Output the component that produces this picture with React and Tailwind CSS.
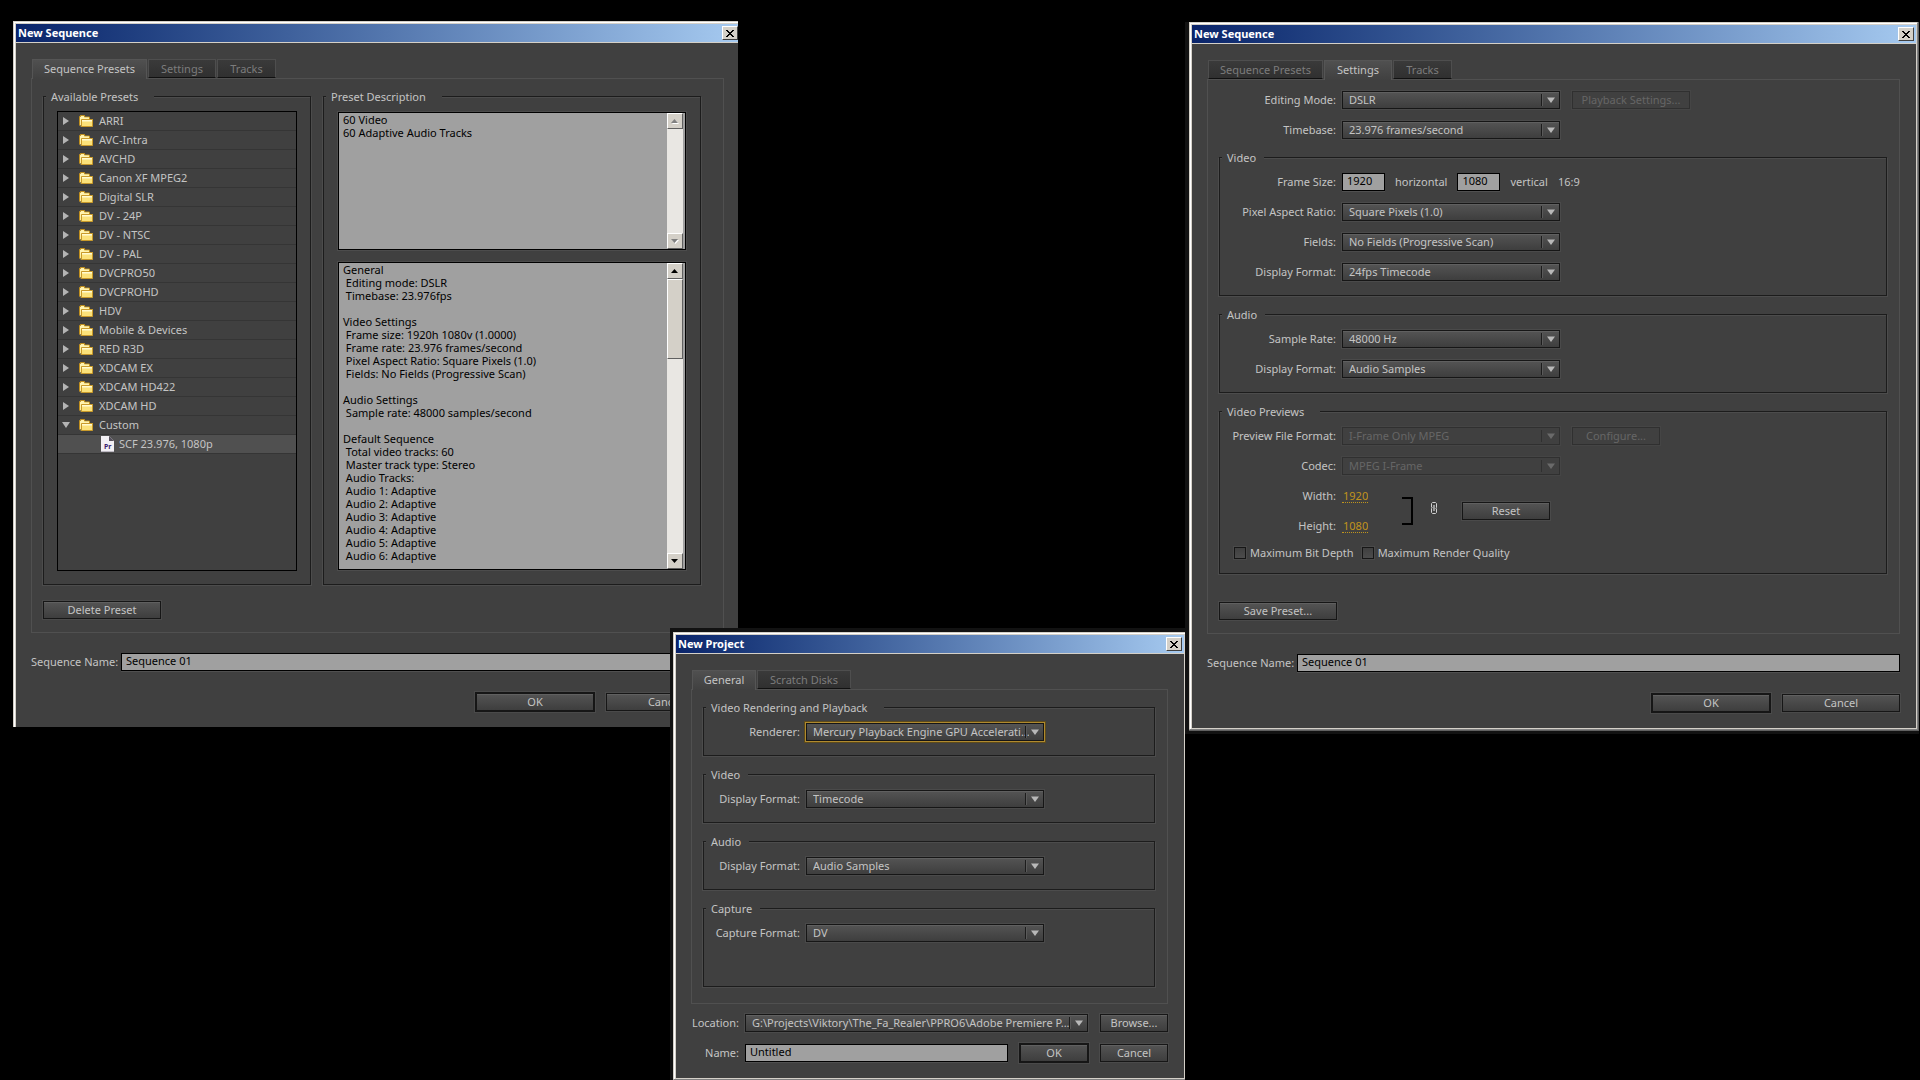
import { useId } from 'react'
import clsx from 'clsx'

const presets = [
  'ARRI',
  'AVC-Intra',
  'AVCHD',
  'Canon XF MPEG2',
  'Digital SLR',
  'DV - 24P',
  'DV - NTSC',
  'DV - PAL',
  'DVCPRO50',
  'DVCPROHD',
  'HDV',
  'Mobile & Devices',
  'RED R3D',
  'XDCAM EX',
  'XDCAM HD422',
  'XDCAM HD',
]

const trackSummary = `60 Video
60 Adaptive Audio Tracks`

const presetDetails = `General
 Editing mode: DSLR
 Timebase: 23.976fps

Video Settings
 Frame size: 1920h 1080v (1.0000)
 Frame rate: 23.976 frames/second
 Pixel Aspect Ratio: Square Pixels (1.0)
 Fields: No Fields (Progressive Scan)

Audio Settings
 Sample rate: 48000 samples/second

Default Sequence
 Total video tracks: 60
 Master track type: Stereo
 Audio Tracks:
 Audio 1: Adaptive
 Audio 2: Adaptive
 Audio 3: Adaptive
 Audio 4: Adaptive
 Audio 5: Adaptive
 Audio 6: Adaptive`

/* ---------- icons ---------- */

function FolderIcon() {
  return (
    <svg className="w-4 h-[14px] shrink-0" viewBox="0 0 16 14">
      <path d="M1.500 11.500v-9h1v-1h4v1.500h5v2" fill="#f6d863" stroke="#c08f1e" />
      <path d="M2 3h1V2h3v1.500h5V5H3v6H2z" fill="#fff3b0" />
      <path d="M3 5h11.500v7.500H2.500z" fill="#fbe27a" />
      <path d="M3.500 5.500h11v7h-11z" fill="none" stroke="#c99a2a" />
      <path d="M4 6h10v1.500H4z" fill="#fffbd2" />
    </svg>
  )
}

function PresetFileIcon() {
  return (
    <svg className="w-[13px] h-4 shrink-0" viewBox="0 0 13 16">
      <path d="M0 0h8l5 5v11H0z" fill="#f2f0f4" />
      <path d="M8 0v5h5z" fill="#55505c" />
      <path d="M0 15.5h13" stroke="#bdb9c2" />
      <text x="3" y="13" fontSize="7" fontWeight="700" fontFamily="Noto Sans, sans-serif" fill="#3a1a6e">Pr</text>
    </svg>
  )
}

function TreeArrow({ open }) {
  return (
    <svg className="w-2 h-2 shrink-0" viewBox="0 0 8 8">
      <path d={open ? 'M0 1h8L4 7z' : 'M1 0l6 4-6 4z'} fill="#b4b4b4" />
    </svg>
  )
}

function CloseIcon() {
  return (
    <svg className="w-2 h-[7px]" viewBox="0 0 8 7" shapeRendering="crispEdges">
      <path
        d="M0 0h2v1H0zM6 0h2v1H6zM1 1h2v1H1zM5 1h2v1H5zM2 2h4v1H2zM3 3h2v1H3zM2 4h4v1H2zM1 5h2v1H1zM5 5h2v1H5zM0 6h2v1H0zM6 6h2v1H6z"
        fill="#000"
      />
    </svg>
  )
}

function ScrollArrow({ up, disabled }) {
  return (
    <svg className="w-[8px] h-[5px]" viewBox="0 0 8 5">
      {disabled && <path d={up ? 'M1 5l3.5-4L8 5z' : 'M1 1h7L4.500 5z'} fill="#fff" />}
      <path d={up ? 'M0 4l3.500-4L7 4z' : 'M0 0h7L3.500 4z'} fill={disabled ? '#808080' : '#000'} />
    </svg>
  )
}

function BracketIcon() {
  return (
    <svg className="w-3 h-7" viewBox="0 0 12 28">
      <path d="M0 1h10v26H0" fill="none" stroke="#000" strokeWidth="2" />
    </svg>
  )
}

function LinkIcon() {
  return (
    <svg className="w-2 h-5" viewBox="0 0 8 20">
      <g fill="none" stroke="#d0d0d0">
        <path d="M1.500 6.500v-4l1-1h3l1 1v4l-1 1" />
        <path d="M2.500 6.500l-1 1v4l1 1h3l1-1v-4" />
      </g>
      <path d="M4 4v6" stroke="#f0f0f0" />
    </svg>
  )
}

/* ---------- controls ---------- */

function Button({ children, className, primary, disabled }) {
  return (
    <button
      type="button"
      disabled={disabled}
      className={clsx(
        'flex items-center justify-center shrink-0 whitespace-nowrap',
        primary ? 'h-5 border-2' : 'h-[18px] border',
        disabled
          ? 'border-[#303030] text-[#666666] shadow-[0_0_0_1px_#454545]'
          : 'border-[#161616] bg-linear-to-b from-[#545454] to-[#3e3e3e] text-[#c4c4c4] shadow-[0_0_0_1px_#4a4a4a,inset_0_1px_0_#606060]',
        className,
      )}
    >
      {children}
    </button>
  )
}

function Select({ id, value, className, focused, disabled }) {
  return (
    <div className={clsx('relative h-[18px]', className)}>
      <select
        id={id}
        disabled={disabled}
        defaultValue={value}
        className={clsx(
          'appearance-none block w-full h-[18px] pl-[6px] pr-[14px] border outline-none rounded-none opacity-100 leading-4',
          disabled
            ? 'border-[#303030] bg-[#404040] text-[#666666] shadow-[0_0_0_1px_#454545]'
            : 'border-[#161616] bg-linear-to-b from-[#545454] to-[#3e3e3e] text-[#c4c4c4]',
          !disabled && !focused && 'shadow-[0_0_0_1px_#4a4a4a,inset_0_1px_0_#606060]',
          focused && 'shadow-[0_0_0_1px_#b08a2e,0_0_0_2px_#5c4a1c]',
        )}
      >
        <option>{value}</option>
      </select>
      <span
        className={clsx(
          'absolute right-[18px] top-[3px] h-3 w-px pointer-events-none',
          disabled ? 'bg-[#303030]' : 'bg-[#1c1c1c] shadow-[1px_0_0_#5a5a5a]',
        )}
      />
      <svg className="absolute right-[5px] top-[6px] w-2 h-[6px] pointer-events-none" viewBox="0 0 8 6">
        <path d="M0 .5h8L4 6z" fill={disabled ? '#6a6a6a' : '#b8b8b8'} />
      </svg>
    </div>
  )
}

function TextInput({ id, value, className, label }) {
  return (
    <input
      id={id}
      aria-label={label}
      type="text"
      defaultValue={value}
      className={clsx(
        'h-[18px] min-w-0 pl-[4px] pb-[3px] border border-black bg-[#a0a0a0] text-black outline-none rounded-none shadow-[0_1px_0_#505050]',
        className,
      )}
    />
  )
}

function Row({ label, labelWidth, htmlFor, children }) {
  return (
    <div className="flex items-center gap-[6px] h-[18px]">
      <label htmlFor={htmlFor} className={clsx('shrink-0 text-right whitespace-nowrap', labelWidth)}>
        {label}
      </label>
      {children}
    </div>
  )
}

function SelectRow({ label, value, labelWidth, width, focused, disabled, children }) {
  const id = useId()
  return (
    <Row label={label} labelWidth={labelWidth} htmlFor={id}>
      <Select id={id} value={value} className={width} focused={focused} disabled={disabled} />
      {children}
    </Row>
  )
}

function Group({ title, className, legendClass = 'pr-2', children }) {
  return (
    <fieldset
      className={clsx(
        'min-w-0 border border-[#1c1c1c] shadow-[-1px_1px_0_#4c4c4c,1px_1px_0_#4c4c4c,inset_0_1px_0_#4c4c4c]',
        className,
      )}
    >
      <legend className={clsx('ml-[2px] pl-[5px] leading-[15px] bg-[#404040]', legendClass)}>{title}</legend>
      {children}
    </fieldset>
  )
}

function Tabs({ items, active }) {
  return (
    <div className="flex gap-px pl-px" role="tablist">
      {items.map(({ name, width }) => (
        <button
          key={name}
          type="button"
          role="tab"
          aria-selected={name === active}
          className={clsx(
            'flex items-center justify-center border whitespace-nowrap',
            width,
            name === active
              ? 'relative h-[20px] -mb-px pb-px border-[#555555] border-b-0 bg-linear-to-b from-[#505050] to-[#404040] text-[#c4c4c4]'
              : 'h-[19px] border-[#4e4e4e] border-b-[#101010] bg-linear-to-b from-[#3a3a3a] to-[#303030] text-[#7c7c7c]',
          )}
        >
          {name}
        </button>
      ))}
    </div>
  )
}

function ScrollButton({ up, disabled }) {
  return (
    <button
      type="button"
      aria-label={up ? 'Scroll up' : 'Scroll down'}
      className="flex items-center justify-center size-4 shrink-0 bg-[#d4d0c8] border border-t-white border-l-white border-r-[#606060] border-b-[#606060]"
    >
      <ScrollArrow up={up} disabled={disabled} />
    </button>
  )
}

function ScrollText({ label, text, className, thumb }) {
  return (
    <div className={clsx('flex border border-black bg-[#a0a0a0] pr-[2px] shadow-[0_0_0_1px_#4c4c4c]', className)}>
      <textarea
        aria-label={label}
        readOnly
        defaultValue={text}
        className="flex-1 min-w-0 resize-none overflow-hidden outline-none pl-1 leading-[13px] text-black whitespace-pre"
      />
      <div className="flex flex-col w-4 bg-[#e9e7e3]">
        <ScrollButton up disabled={!thumb} />
        <div className="flex-1">
          {thumb && (
            <div className="h-20 bg-[#d4d0c8] border border-t-white border-l-white border-r-[#606060] border-b-[#606060]" />
          )}
        </div>
        <ScrollButton disabled={!thumb} />
      </div>
    </div>
  )
}

/* ---------- windows ---------- */

function Window({ title, className, frameClass, children }) {
  return (
    <section className={clsx('absolute', className)}>
      <div className={clsx('border-t border-l border-t-[#d4d0c8] border-l-[#d4d0c8]', frameClass)}>
        <div className="border-t border-l border-white">
          <div className="border border-[#d4d0c8] bg-[#404040]">
            <header className="flex items-center justify-between h-[19px] pl-[2px] pr-[2px] border-b border-[#d4d0c8] bg-linear-to-r from-[#0a246a] to-[#a6caf0]">
              <h2 className="pb-px text-[11px] font-bold text-white">{title}</h2>
              <button
                type="button"
                aria-label="Close"
                className="flex items-center justify-center w-4 h-[14px] bg-[#d4d0c8] border border-t-white border-l-white border-r-[#404040] border-b-[#404040]"
              >
                <CloseIcon />
              </button>
            </header>
            <div className="pt-4 pl-[15px] pr-4">{children}</div>
          </div>
        </div>
      </div>
    </section>
  )
}

function SequenceFooter() {
  const id = useId()
  return (
    <>
      <div className="flex items-center mt-5">
        <label htmlFor={id} className="w-[90px] shrink-0 whitespace-nowrap">Sequence Name:</label>
        <TextInput id={id} value="Sequence 01" className="flex-1" />
      </div>
      <div className="flex items-center justify-end gap-[11px] mt-[21px] pb-[15px]">
        <Button primary className="w-[120px]">OK</Button>
        <Button className="w-[118px]">Cancel</Button>
      </div>
    </>
  )
}

const sequenceTabs = [
  { name: 'Sequence Presets', width: 'w-[115px]' },
  { name: 'Settings', width: 'w-[68px]' },
  { name: 'Tracks', width: 'w-[59px]' },
]

const projectTabs = [
  { name: 'General', width: 'w-[64px]' },
  { name: 'Scratch Disks', width: 'w-[94px]' },
]

function PresetsWindow() {
  return (
    <Window title="New Sequence" className="left-[13px] top-[21px] w-[725px] overflow-hidden" frameClass="w-[728px] -mb-px">
      <Tabs items={sequenceTabs} active="Sequence Presets" />
      <div className="border border-[#505050] pt-[10px] pb-[13px] pl-[11px] pr-[22px]">
        <div className="flex gap-3">
          <Group title="Available Presets" legendClass="pr-4" className="w-[268px] shrink-0 pb-[13px]">
            <ul className="mt-[7px] mx-[13px] h-[460px] border border-black">
              {presets.map((name) => (
                <li key={name} className="flex items-center h-[19px] pl-[4px] border-b border-[#353535]">
                  <TreeArrow />
                  <span className="ml-2 mr-[5px] flex"><FolderIcon /></span>
                  {name}
                </li>
              ))}
              <li>
                <div className="flex items-center h-[19px] pl-[4px] border-b border-[#353535]">
                  <TreeArrow open />
                  <span className="ml-2 mr-[5px] flex"><FolderIcon /></span>
                  Custom
                </div>
                <div className="flex items-center gap-[5px] h-[19px] pl-[43px] border-b border-[#353535] bg-[#505050]">
                  <PresetFileIcon />
                  SCF 23.976, 1080p
                </div>
              </li>
            </ul>
          </Group>
          <Group title="Preset Description" legendClass="pr-4" className="flex-1 pb-[14px]">
            <div className="flex flex-col gap-3 pt-2 px-[14px]">
              <ScrollText label="Tracks" text={trackSummary} className="h-[138px]" />
              <ScrollText label="Preset details" text={presetDetails} className="h-[308px]" thumb />
            </div>
          </Group>
        </div>
        <Button className="mt-4 w-[118px]">Delete Preset</Button>
      </div>
      <SequenceFooter />
    </Window>
  )
}

function SettingsWindow() {
  const ids = { frame: useId(), width: useId(), height: useId() }
  const row = { labelWidth: 'w-[116px]', width: 'w-[218px]' }
  const value = 'w-[26px] pl-px leading-[13px] text-[#c0941c] border-b border-dotted border-[#c0941c] outline-none'

  return (
    <Window
      title="New Sequence"
      className="left-[1189px] top-[22px] w-[730px] border-r border-b border-[#606060] shadow-[-4px_0_0_#121212,-4px_3px_0_#121212,0_3px_0_#121212]"
      frameClass="border-r border-b border-r-[#808080] border-b-[#808080]"
    >
      <Tabs items={sequenceTabs} active="Settings" />
      <div className="border border-[#505050] pt-[11px] pb-[13px] pl-[11px] pr-3">
        <div className="flex flex-col gap-3 mb-[11px] pl-px">
          <SelectRow label="Editing Mode:" value="DSLR" {...row}>
            <Button disabled className="w-[118px] ml-[6px]">Playback Settings...</Button>
          </SelectRow>
          <SelectRow label="Timebase:" value="23.976 frames/second" {...row} />
        </div>

        <div className="flex flex-col gap-[11px]">
          <Group title="Video" className="pb-[14px]">
            <div className="flex flex-col gap-3 pt-2">
              <Row label="Frame Size:" labelWidth={row.labelWidth} htmlFor={ids.frame}>
                <div className="flex items-center gap-[10px]">
                  <TextInput id={ids.frame} value="1920" className="w-[43px]" />
                  <span>horizontal</span>
                  <TextInput label="Vertical frame size" value="1080" className="w-[43px]" />
                  <span>vertical</span>
                  <span>16:9</span>
                </div>
              </Row>
              <SelectRow label="Pixel Aspect Ratio:" value="Square Pixels (1.0)" {...row} />
              <SelectRow label="Fields:" value="No Fields (Progressive Scan)" {...row} />
              <SelectRow label="Display Format:" value="24fps Timecode" {...row} />
            </div>
          </Group>

          <Group title="Audio" className="pb-[14px]">
            <div className="flex flex-col gap-3 pt-2">
              <SelectRow label="Sample Rate:" value="48000 Hz" {...row} />
              <SelectRow label="Display Format:" value="Audio Samples" {...row} />
            </div>
          </Group>

          <Group title="Video Previews" legendClass="pr-4" className="pb-[14px]">
            <div className="flex flex-col gap-3 pt-2">
              <SelectRow label="Preview File Format:" value="I-Frame Only MPEG" disabled {...row}>
                <Button disabled className="w-[88px] ml-[6px]">Configure...</Button>
              </SelectRow>
              <SelectRow label="Codec:" value="MPEG I-Frame" disabled {...row} />
              <div className="flex items-center">
                <div className="flex flex-col gap-3">
                  <Row label="Width:" labelWidth={row.labelWidth} htmlFor={ids.width}>
                    <input id={ids.width} type="text" defaultValue="1920" className={value} />
                  </Row>
                  <Row label="Height:" labelWidth={row.labelWidth} htmlFor={ids.height}>
                    <input id={ids.height} type="text" defaultValue="1080" className={value} />
                  </Row>
                </div>
                <div className="flex items-center gap-4 ml-[34px]">
                  <BracketIcon />
                  <LinkIcon />
                </div>
                <Button className="w-[88px] ml-6">Reset</Button>
              </div>
              <div className="flex items-center gap-[8px] h-3 pl-[14px]">
                {['Maximum Bit Depth', 'Maximum Render Quality'].map((text) => (
                  <label key={text} className="flex items-center gap-1">
                    <input
                      type="checkbox"
                      className="appearance-none size-3 border border-[#161616] bg-linear-to-b from-[#404040] to-[#4c4c4c] shadow-[0_0_0_1px_#4a4a4a]"
                    />
                    {text}
                  </label>
                ))}
              </div>
            </div>
          </Group>
        </div>

        <Button className="mt-7 w-[118px]">Save Preset...</Button>
      </div>
      <SequenceFooter />
    </Window>
  )
}

function ProjectWindow() {
  const ids = { location: useId(), name: useId() }
  const row = { labelWidth: 'w-[96px]', width: 'w-[238px]' }

  return (
    <Window
      title="New Project"
      className="left-[673px] top-[632px] w-[512px] shadow-[-3px_0_0_#121212,-3px_-4px_0_#121212,0_-4px_0_#121212]"
      frameClass="border-b border-b-[#808080]"
    >
      <Tabs items={projectTabs} active="General" />
      <div className="flex flex-col gap-[11px] border border-[#505050] pt-[10px] pb-4 pl-[11px] pr-3">
        <Group title="Video Rendering and Playback" legendClass="pr-4" className="pt-2 pb-[14px]">
          <SelectRow label="Renderer:" value="Mercury Playback Engine GPU Accelerati..." focused {...row} />
        </Group>
        <Group title="Video" className="pt-2 pb-[14px]">
          <SelectRow label="Display Format:" value="Timecode" {...row} />
        </Group>
        <Group title="Audio" className="pt-2 pb-[14px]">
          <SelectRow label="Display Format:" value="Audio Samples" {...row} />
        </Group>
        <Group title="Capture" className="pt-2 pb-11">
          <SelectRow label="Capture Format:" value="DV" {...row} />
        </Group>
      </div>

      <div className="flex flex-col gap-3 pt-[10px] pb-4">
        <Row label="Location:" labelWidth="w-12" htmlFor={ids.location}>
          <Select
            id={ids.location}
            value="G:\Projects\Viktory\The_Fa_Realer\PPRO6\Adobe Premiere P..."
            className="flex-1"
          />
          <Button className="w-[68px] ml-[6px]">Browse...</Button>
        </Row>
        <Row label="Name:" labelWidth="w-12" htmlFor={ids.name}>
          <TextInput id={ids.name} value="Untitled" className="flex-1" />
          <Button primary className="w-[70px] ml-[5px]">OK</Button>
          <Button className="w-[68px] ml-[5px]">Cancel</Button>
        </Row>
      </div>
    </Window>
  )
}

export default function App() {
  return (
    <main className="relative min-h-screen overflow-hidden bg-black font-['Noto_Sans','DejaVu_Sans',sans-serif] text-[11px] leading-[14px] text-[#c4c4c4]">
      <PresetsWindow />
      <ProjectWindow />
      <SettingsWindow />
    </main>
  )
}
